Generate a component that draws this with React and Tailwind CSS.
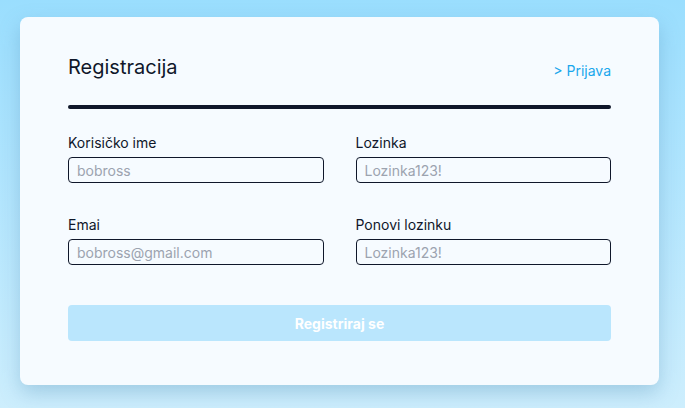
import React from "react";

function Field({ label, placeholder }) {
  return (
    <div className="flex flex-col">
      <label className="text-[14px] leading-[20px] text-[#0f172a] mb-[4px]">{label}</label>
      <input
        type="text"
        placeholder={placeholder}
        className="h-[26px] w-full rounded-[4px] border border-[#0f172a] bg-transparent px-[8px] text-[14px] text-[#0f172a] placeholder:text-[#9ca3af] outline-none"
      />
    </div>
  );
}

export default function App() {
  return (
    <div
      className="h-[408px] w-[685px] bg-gradient-to-b from-[#9adefe] to-[#cdeefd] px-[20px] pt-[17px]"
      style={{ fontFamily: "Inter, 'Open Sans', sans-serif" }}
    >
      <div className="h-[368px] w-[639px] rounded-[8px] bg-[#f6fbff] px-[48px] pt-[36px] shadow-[0_8px_20px_rgba(80,140,180,0.35)]">
        <div className="flex items-end justify-between">
          <h1 className="text-[20px] leading-[28px] text-[#0f172a]">Registracija</h1>
          <a className="text-[14px] leading-[20px] text-[#1aa7ec]">&gt; Prijava</a>
        </div>
        <div className="mt-[24px] h-[4px] w-full rounded-full bg-[#0f172a]" />
        <div className="mt-[24px] grid grid-cols-2 gap-x-[32px] gap-y-[32px]">
          <Field label="Korisičko ime" placeholder="bobross" />
          <Field label="Lozinka" placeholder="Lozinka123!" />
          <Field label="Emai" placeholder="bobross@gmail.com" />
          <Field label="Ponovi lozinku" placeholder="Lozinka123!" />
        </div>
        <button className="mt-[40px] h-[36px] w-full rounded-[4px] bg-[#bae6fd] text-[14px] font-bold text-white">
          Registriraj se
        </button>
      </div>
    </div>
  );
}
